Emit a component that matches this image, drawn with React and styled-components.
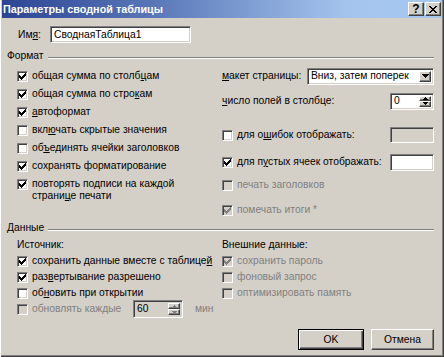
import React from 'react';
import styled, { createGlobalStyle, css } from 'styled-components';

const Global = createGlobalStyle`
  html, body { margin: 0; padding: 0; background: #d4d0c8; }
  body {
    width: 444px; height: 357px; overflow: hidden;
    font-family: "Liberation Sans", Arial, sans-serif;
    font-size: 10.3px; color: #000;
  }
  * { box-sizing: border-box; }
`;

const Window = styled.div`
  width: 444px;
  height: 357px;
  background: #d4d0c8;
  padding: 0 2px 2px 2px;
  box-shadow: inset 1px 0 #ffffff, inset -1px -1px #404040, inset -2px -2px #808080;
  display: flex;
  flex-direction: column;
`;

const TitleBar = styled.div`
  height: 18px;
  display: flex;
  align-items: center;
  justify-content: space-between;
  padding: 0 1px 0 1px;
  background: linear-gradient(to right, #2c4594 0%, #5a78b8 35%, #a4c4ee 78%, #a6c8f0 100%);
`;

const Title = styled.span`
  color: #fff;
  font-weight: bold;
  font-size: 10.8px;
`;

const TitleButtons = styled.div`
  display: flex;
  gap: 1px;
`;

const raised = css`
  background: #d4d0c8;
  border: 1px solid;
  border-color: #ffffff #404040 #404040 #ffffff;
  box-shadow: inset -1px -1px #808080, inset 1px 1px #d4d0c8;
`;

const sunken = css`
  border: 1px solid;
  border-color: #808080 #ffffff #ffffff #808080;
  box-shadow: inset 1px 1px #404040, inset -1px -1px #d4d0c8;
`;

const CaptionButton = styled.div`
  ${raised};
  width: 16px;
  height: 14px;
  display: flex;
  align-items: center;
  justify-content: center;
  font-weight: bold;
  font-size: 12px;
  line-height: 1;
`;

const Body = styled.div`
  flex: 1;
  display: flex;
  flex-direction: column;
  padding: 0 8px 0 5px;
`;

const NameRow = styled.div`
  display: flex;
  align-items: center;
  margin-top: 8px;
  padding-left: 11px;
`;

const NameLabel = styled.span`
  width: 32px;
`;

const TextField = styled.div`
  ${sunken};
  flex: none;
  background: ${p => (p.$disabled ? '#d4d0c8' : '#fff')};
  width: ${p => p.$w}px;
  height: ${p => p.$h || 17}px;
  display: flex;
  align-items: center;
  padding-left: 3px;
  position: relative;
`;

const GroupHeader = styled.div`
  display: flex;
  align-items: center;
  height: 12px;
  margin-top: ${p => p.$mt}px;
`;

const EtchedLine = styled.div`
  flex: 1;
  margin-left: 4px;
  margin-top: 3px;
  height: 2px;
  border-top: 1px solid #808080;
  border-bottom: 1px solid #ffffff;
`;

const Columns = styled.div`
  display: grid;
  grid-template-columns: 215px 1fr;
  margin-top: ${p => p.$mt}px;
`;

const Col = styled.div`
  display: flex;
  flex-direction: column;
  padding-left: ${p => p.$pl || 0}px;
`;

const Row = styled.div`
  display: flex;
  align-items: ${p => (p.$top ? 'flex-start' : 'center')};
  height: ${p => (p.$h ? p.$h + 'px' : 'auto')};
  min-height: ${p => p.$h || 18}px;
  padding: ${p => (p.$top ? '3px 0' : '0')};
  margin-top: ${p => p.$mt || 0}px;
  justify-content: ${p => (p.$spread ? 'space-between' : 'flex-start')};
  color: ${p => (p.$disabled ? '#808080' : '#000')};
`;

const Inline = styled.div`
  display: flex;
  align-items: center;
`;

const Label = styled.span`
  line-height: 12px;
  white-space: nowrap;
  margin-left: ${p => p.$ml || 0}px;
  width: ${p => (p.$w ? p.$w + 'px' : 'auto')};
  color: ${p => (p.$disabled ? '#808080' : 'inherit')};
`;

const Lines = styled.div`
  display: flex;
  flex-direction: column;
`;

const Line = styled.div`
  line-height: 12px;
  white-space: nowrap;
`;

const SubHeader = styled.div`
  line-height: 12px;
  height: 12px;
  margin-bottom: 2px;
`;

const Box = styled.span`
  ${sunken};
  flex: none;
  width: 11px;
  height: 11px;
  margin-right: 4px;
  margin-top: ${p => (p.$top ? 1 : 0)}px;
  background: ${p => (p.$disabled ? '#d4d0c8' : '#fff')};
  display: inline-flex;
  align-items: center;
  justify-content: center;
`;

const CheckBox = ({ checked, disabled, top }) => (
  <Box $disabled={disabled} $top={top}>
    {checked && (
      <svg width="7" height="7" viewBox="0 0 7 7" shapeRendering="crispEdges">
        <path
          d="M0 2h1v1h1v1h1v-1h1v-1h1v-1h1v-1h1v3h-1v1h-1v1h-1v1h-1v1h-1v-1h-1v-1h-1z"
          fill={disabled ? '#808080' : '#000'}
        />
      </svg>
    )}
  </Box>
);

const U = styled.span`
  text-decoration: underline;
`;

const ArrowColumn = styled.div`
  position: absolute;
  right: 2px;
  top: 2px;
  bottom: 2px;
  width: 12px;
  display: flex;
  flex-direction: column;
`;

const ArrowBtn = styled.div`
  ${raised};
  flex: 1;
  display: flex;
  align-items: center;
  justify-content: center;
`;

const Arrow = ({ up, color = '#000', size = 5 }) => {
  const h = Math.ceil(size / 2);
  return (
    <svg width={size} height={h} viewBox={`0 0 ${size} ${h}`} shapeRendering="crispEdges">
      <path
        d={up ? `M0 ${h}L${size / 2} 0L${size} ${h}Z` : `M0 0L${size} 0L${size / 2} ${h}Z`}
        fill={color}
      />
    </svg>
  );
};

const Select = ({ value, w }) => (
  <TextField $w={w} $h={17}>
    <Label>{value}</Label>
    <ArrowColumn>
      <ArrowBtn>
        <Arrow size={7} />
      </ArrowBtn>
    </ArrowColumn>
  </TextField>
);

const Spinner = ({ value, w, h = 17, disabled }) => (
  <TextField $w={w} $h={h} $disabled={disabled}>
    <Label>{value}</Label>
    <ArrowColumn>
      <ArrowBtn>
        <Arrow up size={5} color={disabled ? '#808080' : '#000'} />
      </ArrowBtn>
      <ArrowBtn>
        <Arrow size={5} color={disabled ? '#808080' : '#000'} />
      </ArrowBtn>
    </ArrowColumn>
  </TextField>
);

const ButtonRow = styled.div`
  display: flex;
  justify-content: flex-end;
  gap: 7px;
  margin-top: 12px;
`;

const Button = styled.div`
  ${raised};
  width: ${p => p.$w}px;
  height: 21px;
  display: flex;
  align-items: center;
  justify-content: center;
  ${p =>
    p.$default &&
    css`
      border: 1px solid #000;
      box-shadow: inset 1px 1px #fff, inset -1px -1px #404040, inset -2px -2px #808080;
    `}
`;

export default function App() {
  return (
    <>
      <Global />
      <Window>
        <TitleBar>
          <Title>Параметры сводной таблицы</Title>
          <TitleButtons>
            <CaptionButton>?</CaptionButton>
            <CaptionButton>
              <svg width="8" height="7" viewBox="0 0 8 7" shapeRendering="crispEdges">
                <path d="M0 0h2l2 2.5L6 0h2L5 3.5 8 7H6L4 4.5 2 7H0l3-3.5z" fill="#000" />
              </svg>
            </CaptionButton>
          </TitleButtons>
        </TitleBar>
        <Body>
          <NameRow>
            <NameLabel>
              Им<U>я</U>:
            </NameLabel>
            <TextField $w={141} $h={17}>
              <Label>СводнаяТаблица1</Label>
            </TextField>
          </NameRow>

          <GroupHeader $mt={7}>
            <Label>Формат</Label>
            <EtchedLine />
          </GroupHeader>

          <Columns $mt={5}>
            <Col $pl={10}>
              <Row>
                <CheckBox checked />
                <Label>общая сумма по столб<U>ц</U>ам</Label>
              </Row>
              <Row>
                <CheckBox checked />
                <Label>общая сумма по стро<U>к</U>ам</Label>
              </Row>
              <Row>
                <CheckBox checked />
                <Label><U>а</U>втоформат</Label>
              </Row>
              <Row>
                <CheckBox />
                <Label>вкл<U>ю</U>чать скрытые значения</Label>
              </Row>
              <Row>
                <CheckBox />
                <Label>об<U>ъ</U>единять ячейки заголовков</Label>
              </Row>
              <Row>
                <CheckBox checked />
                <Label>сохранять форматирование</Label>
              </Row>
              <Row $top>
                <CheckBox checked top />
                <Lines>
                  <Line>повторять подписи на каждой</Line>
                  <Line>страни<U>ц</U>е печати</Line>
                </Lines>
              </Row>
            </Col>
            <Col>
              <Row $spread>
                <Label><U>м</U>акет страницы:</Label>
                <Select value="Вниз, затем поперек" w={127} />
              </Row>
              <Row $spread $mt={7}>
                <Label><U>ч</U>исло полей в столбце:</Label>
                <Spinner value="0" w={44} />
              </Row>
              <Row $spread $mt={16}>
                <Inline>
                  <CheckBox />
                  <Label>для о<U>ш</U>ибок отображать:</Label>
                </Inline>
                <TextField $w={44} $h={16} $disabled />
              </Row>
              <Row $spread $mt={9}>
                <Inline>
                  <CheckBox checked />
                  <Label>для п<U>у</U>стых ячеек отображать:</Label>
                </Inline>
                <TextField $w={44} $h={17} />
              </Row>
              <Row $mt={5} $disabled>
                <CheckBox disabled />
                <Label>печать заголовков</Label>
              </Row>
              <Row $mt={7} $disabled>
                <CheckBox checked disabled />
                <Label>помечать итоги *</Label>
              </Row>
            </Col>
          </Columns>

          <GroupHeader $mt={3}>
            <Label>Данные</Label>
            <EtchedLine />
          </GroupHeader>

          <Columns $mt={5}>
            <Col $pl={10}>
              <SubHeader>Источник:</SubHeader>
              <Row $h={16}>
                <CheckBox checked />
                <Label>сохранить данные вместе с таблице<U>й</U></Label>
              </Row>
              <Row $h={16}>
                <CheckBox checked />
                <Label>раз<U>в</U>ертывание разрешено</Label>
              </Row>
              <Row $h={16}>
                <CheckBox />
                <Label>об<U>н</U>овить при открытии</Label>
              </Row>
              <Row $h={16}>
                <CheckBox disabled />
                <Label $w={101} $disabled>обновлять каждые</Label>
                <Spinner value="60" w={50} h={18} disabled />
                <Label $ml={12} $disabled>мин</Label>
              </Row>
            </Col>
            <Col>
              <SubHeader>Внешние данные:</SubHeader>
              <Row $h={16} $disabled>
                <CheckBox checked disabled />
                <Label>сохранить пароль</Label>
              </Row>
              <Row $h={16} $disabled>
                <CheckBox disabled />
                <Label>фоновый запрос</Label>
              </Row>
              <Row $h={16} $disabled>
                <CheckBox disabled />
                <Label>оптимизировать память</Label>
              </Row>
            </Col>
          </Columns>

          <ButtonRow>
            <Button $w={66} $default>OK</Button>
            <Button $w={63}>Отмена</Button>
          </ButtonRow>
        </Body>
      </Window>
    </>
  );
}
